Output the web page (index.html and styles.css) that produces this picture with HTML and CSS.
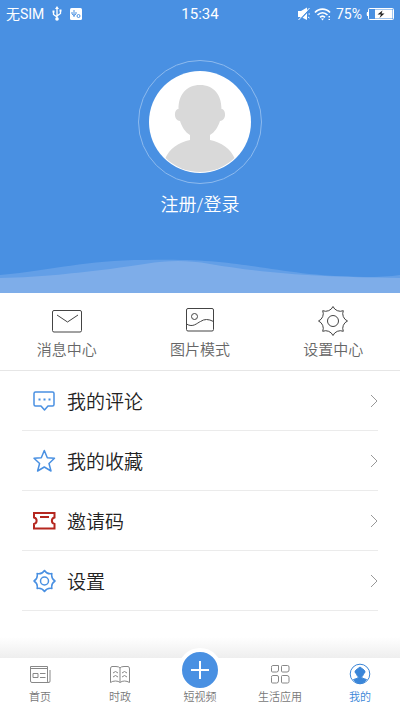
FILE: index.html
```html
<!DOCTYPE html>
<html lang="zh-CN">
<head>
<meta charset="utf-8">
<meta name="viewport" content="width=device-width, initial-scale=1">
<title>我的</title>
<link rel="stylesheet" href="styles.css">
</head>
<body>
<header class="hero">
  <div class="status">
    <div class="status-side">
      <span class="carrier">无SIM</span>
      <svg width="10" height="16" viewBox="0 0 10 16" fill="none" stroke="#fff" stroke-width="1.300"><path d="M5 2v10M1.500 6v2.500L5 11M8.500 5v2.500L5 10"/><path d="M5 0l2 3H3zM.5 4.500h2v2h-2zM7.500 3.500h2v2h-2z" fill="#fff" stroke="none"/><circle cx="5" cy="13" r="1.800" fill="#fff" stroke="none"/></svg>
      <svg width="12" height="12" viewBox="0 0 12 12"><rect width="12" height="12" rx="1.500" fill="#fff"/><g fill="none" stroke="#4990e2"><path d="M4 2v7M2 4v2l2 1.500M6 4v2L4 7.500"/><circle cx="8.500" cy="8" r="1.500"/></g></svg>
    </div>
    <span class="clock">15:34</span>
    <div class="status-side status-right">
      <svg width="12" height="14" viewBox="0 0 12 14"><path d="M0 4h3l6-3.500v12.500L3 10H0z" fill="#fff"/><path d="M.5 14L12 2" stroke="#4990e2" stroke-width="1.500"/><path d="M.5 13L11.500 1M10.500 7h1.500M10 10l1.500 1" stroke="#fff"/></svg>
      <svg width="18" height="13" viewBox="0 0 18 13" fill="none" stroke="#fff" stroke-width="1.700"><path d="M1 4.500c4-4.500 11-4.500 15 0M3.500 7c3-3 7-3 10 0M6 9.300c1.500-1.500 3.500-1.500 5 0"/><path d="M7 10.500h3L8.500 12.500zM14.500 8h1.500v1.500h-1.500zM14.500 11h1.500v1h-1.500z" fill="#fff" stroke="none"/></svg>
      <span class="charge">75%</span>
      <svg width="28" height="12" viewBox="0 0 28 12"><path d="M2 4H1Q.2 6 1 8h1" fill="#fff"/><rect x="2.500" y=".5" width="25" height="11" rx="1" fill="none" stroke="#fff"/><path d="M9 1.500h17.500v9H9z" fill="#fff"/><path d="M16.500 2.500l-5 4h3.500L13.500 10l5-4.500h-3z" fill="#222"/></svg>
    </div>
  </div>
  <a class="profile" href="#login">
    <span class="ring">
      <svg width="102" height="102" viewBox="0 0 102 102"><defs><clipPath id="face"><circle cx="51" cy="51" r="50"/></clipPath></defs><circle cx="51" cy="51" r="51" fill="#fff"/><g fill="#d9d9d9" clip-path="url(#face)"><path d="M51 14C37 14 29.500 24 29.500 38C25 38 24 49 31 50C33 56 36 61 41 64V69C30 71 20 78 16 88V102H86V88C82 78 72 71 61 69V64C66 61 69 56 71 50C78 49 77 38 72.500 38C72.500 24 65 14 51 14Z"/></g></svg>
    </span>
    <span class="login">注册/登录</span>
  </a>
  <svg class="wave" viewBox="0 0 400 34" preserveAspectRatio="none"><path d="M0 16C55 11 85 1 145 1C250-2 270 17 365 18Q385 18 400 16V34H0Z" fill="#639fe7"/><path d="M0 19C45 18 75 14 110 10C150 5 170-2 210 5C270 15 320 18 400 19V34H0Z" fill="#7eade9"/></svg>
</header>

<main>
  <nav class="actions" aria-label="快捷入口">
    <a class="action" href="#messages"><svg width="32" height="30" viewBox="0 0 32 30"><rect x="1.500" y="4.500" width="29" height="21.500" rx="1.500"/><path d="M6 9l10.500 7L27 9"/></svg><span>消息中心</span></a>
    <a class="action" href="#pictures"><svg width="32" height="30" viewBox="0 0 32 30"><rect x="2.500" y="2.500" width="27" height="22.500" rx="1.500"/><circle cx="10.500" cy="10.500" r="3"/><path d="M2.500 18C9 22 13 17 16.500 15.500Q22 11.500 29.500 15.500"/></svg><span>图片模式</span></a>
    <a class="action" href="#preferences"><svg width="32" height="30" viewBox="0 0 32 30"><path d="M16 .5A8 8 0 0 0 26.300 4.700A8 8 0 0 0 30.500 15A8 8 0 0 0 26.300 25.300A8 8 0 0 0 16 29.500A8 8 0 0 0 5.700 25.300A8 8 0 0 0 1.500 15A8 8 0 0 0 5.700 4.700A8 8 0 0 0 16 .5Z"/><circle cx="16" cy="15" r="5.500"/></svg><span>设置中心</span></a>
  </nav>
  <ul class="menu">
    <li><a class="row" href="#comments"><svg class="icon" width="24" height="24" viewBox="0 0 24 24"><path d="M3.500 3h17Q22 3 22 4.500v11q0 1.500-1.500 1.500H16l-3.500 4L9 17H3.500Q2 17 2 15.500v-11Q2 3 3.500 3z"/><path d="M6.500 10.500h2M11.500 10.500h2M16.500 10.500h2" stroke-width="2"/></svg><span>我的评论</span><svg class="chevron" width="8" height="14" viewBox="0 0 8 14"><path d="M1 1l6 6-6 6"/></svg></a></li>
    <li><a class="row" href="#favorites"><svg class="icon" width="24" height="24" viewBox="0 0 24 24"><path d="M12.300 1.500l3 7.300 7.200.5-5.500 5.200 2 7.500-6.700-4-6.700 4 2-7.500L2 9.300l7.300-.5z"/></svg><span>我的收藏</span><svg class="chevron" width="8" height="14" viewBox="0 0 8 14"><path d="M1 1l6 6-6 6"/></svg></a></li>
    <li><a class="row" href="#invite"><svg class="icon ticket" width="24" height="24" viewBox="0 0 24 24"><path d="M2 4h20.500V8.500C19 9.500 19 14 22.500 15V19.500H2V15C5.500 14 5.500 9.500 2 8.500zM8 8h9"/></svg><span>邀请码</span><svg class="chevron" width="8" height="14" viewBox="0 0 8 14"><path d="M1 1l6 6-6 6"/></svg></a></li>
    <li><a class="row" href="#settings"><svg class="icon" width="24" height="24" viewBox="0 0 24 24"><path d="M12.500 1.500A7 7 0 0 0 19.900 4.600A7 7 0 0 0 23 12A7 7 0 0 0 19.900 19.400A7 7 0 0 0 12.500 22.500A7 7 0 0 0 5.100 19.400A7 7 0 0 0 2 12A7 7 0 0 0 5.100 4.600A7 7 0 0 0 12.500 1.500Z"/><circle cx="12.500" cy="12" r="4"/></svg><span>设置</span><svg class="chevron" width="8" height="14" viewBox="0 0 8 14"><path d="M1 1l6 6-6 6"/></svg></a></li>
  </ul>
</main>

<nav class="tabs" aria-label="主导航">
  <a class="tab" href="#home"><svg width="24" height="24" viewBox="0 0 24 24"><path d="M20 20.500H4q-1.500 0-1.500-1.500V4.500h17V19q0 2 1.500 1.500 1 0 1-1.500V8M3 6.500h16M5 11.500h5v4H5zM12 11.500h5.500M12 15.500h5.500"/></svg><span>首页</span></a>
  <a class="tab" href="#politics"><svg width="24" height="24" viewBox="0 0 24 24"><path d="M12 6Q11 4.500 8 4.500H4Q2.500 4.500 2.500 7v13.500q2-1.500 5-1.500t4.500 1.500q2-1.500 4.500-1.500t5 1.500V7q0-2.500-1.500-2.500h-4Q13 4.500 12 6zM12 6v14M5 11l2.500-1.500L10 11M5 15l2.500-1.500L10 15M14 11l2.500-1.500L19 11M14 15l2.500-1.500L19 15"/></svg><span>时政</span></a>
  <a class="tab" href="#video"><span class="plus"><svg width="20" height="20" viewBox="0 0 20 20"><path d="M10 1v18M1 10h18"/></svg></span><span>短视频</span></a>
  <a class="tab" href="#life"><svg width="24" height="24" viewBox="0 0 24 24"><path d="M4.500 3.500h6v4.500q0 2-2 2h-4q-1 0-1-1V5.500q0-2 1-2zM14.500 3.500h5q1.500 0 1.500 1.500v3q0 2-2 2h-4.500q-1 0-1-1V4.500q0-1 1-1zM4.500 13.500h4.500q1.500 0 1.500 1.500v4q0 2-2 2h-4q-1 0-1-1v-4.500q0-2 1-2zM14.500 13.500h4.500q2 0 2 2v4q0 1.500-1.500 1.500h-5q-1 0-1-1v-5.500q0-1 1-1z"/></svg><span>生活应用</span></a>
  <a class="tab active" href="#me" aria-current="page"><svg width="24" height="24" viewBox="0 0 24 24"><circle cx="12" cy="12" r="9.800"/><path d="M12 5L8 8Q5.500 10 8.500 12Q9 14 10.500 15Q10 16.500 5.500 17.500Q8 21.500 12 21.500T18.500 17.500Q14 16.500 13.500 15Q15 14 15.500 12Q18.500 10 16 8Z" fill="currentColor"/></svg><span>我的</span></a>
</nav>
</body>
</html>
```

FILE: styles.css
```css
* {
  box-sizing: border-box;
}

body {
  margin: 0;
  min-height: 100vh;
  display: flex;
  flex-direction: column;
  background: #fff;
  color: #222;
  font-family: Roboto, "Noto Sans CJK SC", sans-serif;
  font-weight: 350;
}

a {
  color: inherit;
  text-decoration: none;
}

svg {
  display: block;
  flex: none;
}

.hero {
  display: flex;
  flex-direction: column;
  background: #4990e2;
  color: #fff;
}

.status {
  display: grid;
  grid-template-columns: 1fr auto 1fr;
  align-items: center;
  height: 28px;
  padding: 0 6px;
  font-weight: 400;
}

.status-side {
  display: flex;
  align-items: center;
  gap: 8px;
  line-height: 16px;
}

.status-right {
  justify-content: flex-end;
  gap: 4px;
}

.carrier,
.charge {
  font-size: 14px;
}

.clock {
  font-size: 15px;
}

.profile {
  display: flex;
  flex-direction: column;
  align-items: center;
  gap: 8px;
  padding: 32px 0 41px;
}

.ring {
  padding: 10px;
  border: 1px solid #8dbaee;
  border-radius: 50%;
}

.login {
  font-size: 18px;
  line-height: 26px;
}

.wave {
  width: 100%;
  height: 34px;
}

.actions {
  display: grid;
  grid-template-columns: repeat(3, 1fr);
  height: 78px;
  border-bottom: 1px solid #e6e6e6;
}

.action {
  display: flex;
  flex-direction: column;
  align-items: center;
  padding-top: 13px;
  color: #666;
  font-size: 15px;
  line-height: 28px;
}

.action svg {
  fill: none;
  stroke: #444;
}

.menu {
  margin: 0;
  padding: 0 22px;
  list-style: none;
}

.row {
  display: flex;
  align-items: center;
  height: 60px;
  padding-left: 10px;
  gap: 11px;
  border-bottom: 1px solid #ebebeb;
  font-size: 19px;
}

.icon {
  fill: none;
  stroke: #4990e2;
  stroke-width: 1.5;
  stroke-linejoin: round;
}

.ticket {
  stroke: #b5271f;
  stroke-width: 2;
  stroke-linejoin: miter;
}

.chevron {
  margin-left: auto;
  fill: none;
  stroke: #999;
}

.tabs {
  display: grid;
  grid-template-columns: repeat(5, 1fr);
  height: 74px;
  margin-top: auto;
  background: linear-gradient(#fff, #eee 21px, #fff 21px);
}

.tab {
  display: flex;
  flex-direction: column;
  align-items: center;
  justify-content: flex-end;
  padding-bottom: 5px;
  color: #777;
  font-size: 11px;
  line-height: 16px;
}

.tab svg {
  margin-bottom: 4px;
  fill: none;
  stroke: #888;
}

.tab .plus {
  display: grid;
  place-items: center;
  width: 44px;
  height: 44px;
  margin-bottom: -2px;
  border: 4px solid #fff;
  border-radius: 50%;
  background: #4990e2;
}

.tab .plus svg {
  margin: 0;
  stroke: #fff;
  stroke-width: 2;
}

.tab.active {
  color: #3b86d8;
}

.tab.active svg {
  stroke: #3b86d8;
}
```
